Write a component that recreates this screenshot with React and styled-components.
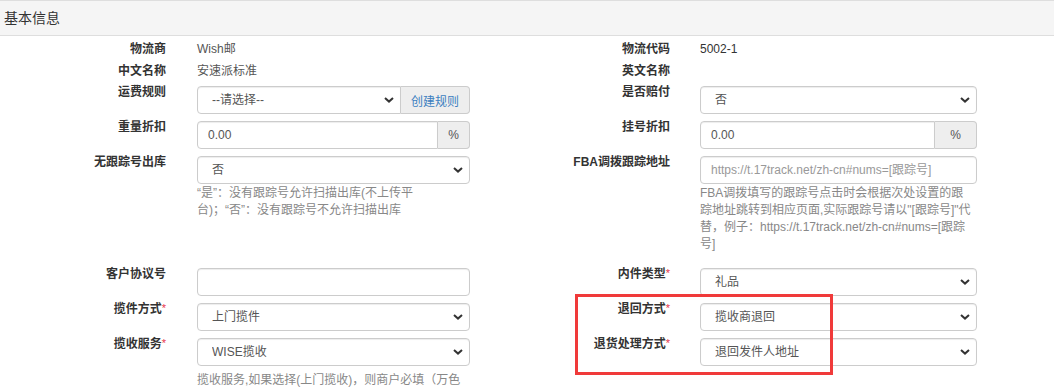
import React from "react";
import styled, { createGlobalStyle } from "styled-components";

const GlobalStyle = createGlobalStyle`
  html, body {
    margin: 0;
    padding: 0;
    overflow: hidden;
    background: #fff;
  }
  body {
    font-family: "Liberation Sans", Arial, "Noto Sans CJK SC", sans-serif;
    font-size: 12px;
    color: #333;
  }
`;

const SIDES = {
  left: { label: 166, gap: 31, field: 273 },
  right: { label: 143, gap: 30, field: 277 },
};

export default function App() {
  return (
    <Page>
      <GlobalStyle />
      <PanelHeading>基本信息</PanelHeading>
      <PanelBody>
        <StaticRow>
          <Cell side="left">
            <Label side="left" $static>物流商</Label>
            <Field side="left">
              <Value>Wish邮</Value>
            </Field>
          </Cell>
          <Cell side="right">
            <Label side="right" $static>物流代码</Label>
            <Field side="right">
              <Value $dark>5002-1</Value>
            </Field>
          </Cell>
        </StaticRow>
        <StaticRow>
          <Cell side="left">
            <Label side="left" $static>中文名称</Label>
            <Field side="left">
              <Value>安速派标准</Value>
            </Field>
          </Cell>
          <Cell side="right">
            <Label side="right" $static>英文名称</Label>
            <Field side="right" />
          </Cell>
        </StaticRow>

        <FormRow $top={4}>
          <Cell side="left">
            <Label side="left">运费规则</Label>
            <Field side="left">
              <InputGroup>
                <SelectBox value="--请选择--" joined />
                <Addon $width={69} $blue>创建规则</Addon>
              </InputGroup>
            </Field>
          </Cell>
          <Cell side="right">
            <Label side="right">是否赔付</Label>
            <Field side="right">
              <SelectBox value="否" />
            </Field>
          </Cell>
        </FormRow>

        <FormRow $top={7}>
          <Cell side="left">
            <Label side="left">重量折扣</Label>
            <Field side="left">
              <InputGroup>
                <TextInput defaultValue="0.00" $joined />
                <Addon $width={32}>%</Addon>
              </InputGroup>
            </Field>
          </Cell>
          <Cell side="right">
            <Label side="right">挂号折扣</Label>
            <Field side="right">
              <InputGroup>
                <TextInput defaultValue="0.00" $joined />
                <Addon $width={42}>%</Addon>
              </InputGroup>
            </Field>
          </Cell>
        </FormRow>

        <FormRow $top={7}>
          <Cell side="left">
            <Label side="left">无跟踪号出库</Label>
            <Field side="left">
              <SelectBox value="否" />
              <Help>
                <HelpLine>“是”：没有跟踪号允许扫描出库(不上传平</HelpLine>
                <HelpLine>台)；“否”：没有跟踪号不允许扫描出库</HelpLine>
              </Help>
            </Field>
          </Cell>
          <Cell side="right">
            <Label side="right">FBA调拨跟踪地址</Label>
            <Field side="right">
              <TextInput placeholder="https://t.17track.net/zh-cn#nums=[跟踪号]" />
              <Help>
                <HelpLine>FBA调拨填写的跟踪号点击时会根据次处设置的跟</HelpLine>
                <HelpLine>踪地址跳转到相应页面,实际跟踪号请以"[跟踪号]"代</HelpLine>
                <HelpLine>替，例子：https://t.17track.net/zh-cn#nums=[跟踪</HelpLine>
                <HelpLine>号]</HelpLine>
              </Help>
            </Field>
          </Cell>
        </FormRow>

        <FormRow $top={7}>
          <Cell side="left">
            <Label side="left">客户协议号</Label>
            <Field side="left">
              <TextInput />
            </Field>
          </Cell>
          <Cell side="right">
            <Label side="right">
              内件类型<Required>*</Required>
            </Label>
            <Field side="right">
              <SelectBox value="礼品" />
            </Field>
          </Cell>
        </FormRow>

        <FormRow $top={7}>
          <Cell side="left">
            <Label side="left">
              揽件方式<Required>*</Required>
            </Label>
            <Field side="left">
              <SelectBox value="上门揽件" />
            </Field>
          </Cell>
          <Cell side="right">
            <Label side="right">
              退回方式<Required>*</Required>
            </Label>
            <Field side="right">
              <SelectBox value="揽收商退回" />
            </Field>
          </Cell>
        </FormRow>

        <FormRow $top={7}>
          <Cell side="left">
            <Label side="left">
              揽收服务<Required>*</Required>
            </Label>
            <Field side="left">
              <SelectBox value="WISE揽收" />
              <Help $top={6}>
                <HelpLine>揽收服务,如果选择(上门揽收)，则商户必填（万色</HelpLine>
              </Help>
            </Field>
          </Cell>
          <Cell side="right">
            <Label side="right">
              退货处理方式<Required>*</Required>
            </Label>
            <Field side="right">
              <SelectBox value="退回发件人地址" />
            </Field>
          </Cell>
        </FormRow>
      </PanelBody>
      <Highlight />
    </Page>
  );
}

function SelectBox({ value, joined }) {
  return (
    <SelectWrap>
      <Select defaultValue={value} $joined={joined}>
        <option>{value}</option>
      </Select>
      <Chevron width="10" height="6" viewBox="0 0 10 6">
        <path d="M1 1l4 3.6L9 1" fill="none" stroke="#333" strokeWidth="2" />
      </Chevron>
    </SelectWrap>
  );
}

const Page = styled.div`
  position: relative;
  width: 1054px;
`;

const PanelHeading = styled.div`
  box-sizing: border-box;
  height: 36px;
  padding: 0 4px;
  background: #f5f5f5;
  border-top: 1px solid #dedede;
  border-bottom: 1px solid #dedede;
  font-size: 14px;
  line-height: 34px;
  color: #333;
`;

const PanelBody = styled.div`
  padding-top: 2px;
`;

const StaticRow = styled.div`
  display: grid;
  grid-template-columns: 527px 527px;
  height: 22px;
`;

const FormRow = styled.div`
  display: grid;
  grid-template-columns: 527px 527px;
  align-items: start;
  margin-top: ${(p) => p.$top || 0}px;
`;

const Cell = styled.div`
  display: flex;
  align-items: flex-start;
`;

const Label = styled.div`
  flex: none;
  width: ${(p) => SIDES[p.side].label}px;
  text-align: right;
  font-weight: bold;
  color: #333;
  line-height: ${(p) => (p.$static ? "22px" : "13px")};
  white-space: nowrap;
`;

const Required = styled.span`
  color: #e8364a;
  font-size: 11px;
  font-weight: normal;
  vertical-align: top;
  line-height: 10px;
`;

const Field = styled.div`
  flex: none;
  width: ${(p) => SIDES[p.side].field}px;
  margin-left: ${(p) => SIDES[p.side].gap}px;
`;

const Value = styled.div`
  line-height: 22px;
  color: ${(p) => (p.$dark ? "#333" : "#555")};
`;

const InputGroup = styled.div`
  display: flex;
`;

const TextInput = styled.input`
  box-sizing: border-box;
  display: block;
  width: 100%;
  flex: 1;
  min-width: 0;
  height: 28px;
  padding: 0 10px;
  border: 1px solid #ccc;
  border-radius: ${(p) => (p.$joined ? "4px 0 0 4px" : "4px")};
  box-shadow: inset 0 1px 1px rgba(0, 0, 0, 0.075);
  font: 12px "Liberation Sans", Arial, "Noto Sans CJK SC", sans-serif;
  color: #555;
  outline: none;

  &::placeholder {
    color: #999;
  }
`;

const Addon = styled.div`
  box-sizing: border-box;
  flex: none;
  width: ${(p) => p.$width}px;
  height: 28px;
  display: flex;
  align-items: center;
  justify-content: center;
  background: #eee;
  border: 1px solid #ccc;
  border-left: none;
  border-radius: 0 4px 4px 0;
  color: ${(p) => (p.$blue ? "#3c7fc0" : "#555")};
`;

const SelectWrap = styled.div`
  position: relative;
  flex: 1;
  min-width: 0;
`;

const Select = styled.select`
  box-sizing: border-box;
  display: block;
  width: 100%;
  height: 28px;
  padding: 0 24px 0 14px;
  appearance: none;
  background: #fff;
  border: 1px solid #ccc;
  border-radius: ${(p) => (p.$joined ? "4px 0 0 4px" : "4px")};
  box-shadow: inset 0 1px 1px rgba(0, 0, 0, 0.075);
  font: 12px "Liberation Sans", Arial, "Noto Sans CJK SC", sans-serif;
  color: #555;
  outline: none;
`;

const Chevron = styled.svg`
  position: absolute;
  right: 7px;
  top: 11px;
  pointer-events: none;
`;

const Help = styled.div`
  margin-top: ${(p) => (p.$top != null ? p.$top : 1)}px;
  margin-bottom: 8px;
  color: #888;
  line-height: 17px;
`;

const HelpLine = styled.div`
  white-space: nowrap;
`;

const Highlight = styled.div`
  position: absolute;
  left: 575px;
  top: 294px;
  width: 258px;
  height: 81px;
  box-sizing: border-box;
  border: 3px solid #f03a3a;
  pointer-events: none;
`;
